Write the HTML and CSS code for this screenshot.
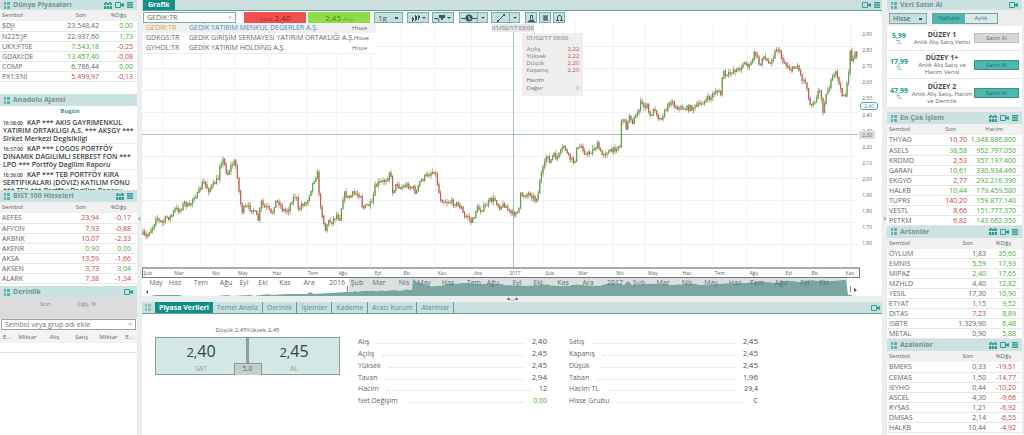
FILE: index.html
```html
<!DOCTYPE html>
<html lang="tr">
<head>
<meta charset="utf-8">
<title>GEDIK:TR</title>
<link rel="stylesheet" href="styles.css">
</head>
<body>
<svg class="defs" aria-hidden="true">
  <symbol id="grip" viewBox="0 0 6 7"><path d="M0 0h2v3H0zM3 0h3v3H3zM0 4h2v3H0zM3 4h3v3H3z" opacity=".8"/></symbol>
  <symbol id="gift" viewBox="0 0 8 7"><path d="M0 1h8v2H0zM0 4h8v3H0zM1 0h2v1H1zM5 0h2v1H5z"/><path d="M2.500 1v6M5.500 1v6" stroke="#cbe2e0" stroke-width=".6" fill="none"/></symbol>
  <symbol id="cam" viewBox="0 0 9 6"><path d="M.5.5h5v5h-5z" fill="none" stroke="currentColor"/><path d="M6 2l3-1v4l-3-1z"/></symbol>
  <symbol id="menu" viewBox="0 0 6 6"><path d="M0 0h6v1.400H0zM0 2.300h6v1.400H0zM0 4.600h6v1.400H0z"/></symbol>
</svg>
<div class="app">
  <aside class="col">
    <section class="panel world">
      <h2 class="title"><svg class="i-grip"><use href="#grip"/></svg><span>Dünya Piyasaları</span><svg class="i-gift"><use href="#gift"/></svg><svg class="i-cam"><use href="#cam"/></svg><svg class="i-menu"><use href="#menu"/></svg></h2>
      <table class="quotes">
        <thead><tr><th>Sembol</th><th>Son</th><th>%Dğş</th></tr></thead>
        <tbody>
        <tr><td>$DJI</td><td>23.548,42</td><td class="up">0,00</td></tr>
        <tr><td>N225:JP</td><td>22.937,60</td><td class="up">1,73</td></tr>
        <tr><td>UKX:FTSE</td><td class="up">7.543,18</td><td class="dn">-0,25</td></tr>
        <tr><td>GDAXI:DE</td><td class="up">13.457,40</td><td class="dn">-0,08</td></tr>
        <tr><td>COMP</td><td>6.786,44</td><td class="up">0,00</td></tr>
        <tr><td>PX1:ENI</td><td class="dn">5.499,97</td><td class="dn">-0,13</td></tr>
        </tbody>
      </table>
    </section>
    <section class="panel">
      <h2 class="title"><svg class="i-grip"><use href="#grip"/></svg><span>Anadolu Ajansi</span></h2>
      <div class="news">
        <h3>Bugün</h3>
        <p><time>16:38:00</time>KAP *** AKIS GAYRIMENKUL YATIRIM ORTAKLIGI A.S. *** AKSGY *** Sirket Merkezi Degisikligi</p>
        <p><time>16:37:00</time>KAP *** LOGOS PORTFÖY DINAMIK DAGILIMLI SERBEST FON *** LPO *** Portföy Dagilim Raporu</p>
        <p><time>16:36:00</time>KAP *** TEB PORTFÖY KIRA SERTIFIKALARI (DÖVIZ) KATILIM FONU *** TEY *** Portföy Dagilim Raporu</p>
      </div>
    </section>
    <section class="panel">
      <h2 class="title"><svg class="i-grip"><use href="#grip"/></svg><span>BİST 100 Hisseleri</span><svg class="i-gift"><use href="#gift"/></svg><svg class="i-menu"><use href="#menu"/></svg></h2>
      <div class="clip">
      <table class="quotes inset">
        <thead><tr><th>Sembol</th><th>Son</th><th>%Dğş</th></tr></thead>
        <tbody>
        <tr><td>AEFES</td><td class="dn">23,94</td><td class="dn">-0,17</td></tr>
        <tr><td>AFYON</td><td class="dn">7,93</td><td class="dn">-0,88</td></tr>
        <tr><td>AKBNK</td><td class="dn">10,07</td><td class="dn">-2,33</td></tr>
        <tr><td>AKENR</td><td class="up">0,90</td><td class="up">0,00</td></tr>
        <tr><td>AKSA</td><td class="dn">13,59</td><td class="dn">-1,66</td></tr>
        <tr><td>AKSEN</td><td class="dn">3,73</td><td class="up">3,04</td></tr>
        <tr><td>ALARK</td><td class="dn">7,38</td><td class="dn">-1,34</td></tr>
        <tr><td>ALBRK</td><td class="dn">1,40</td><td class="dn">-1,38</td></tr>
        </tbody>
      </table>
      </div>
    </section>
    <section class="panel grow">
      <h2 class="title"><svg class="i-grip"><use href="#grip"/></svg><span>Derinlik</span><svg class="i-cam"><use href="#cam"/></svg></h2>
      <div class="depth-head"><span>Son</span><span>Dğş, %</span></div>
      <div class="symbol-box"><input class="add" type="text" aria-label="Sembol veya grup adı ekle" placeholder="Sembol veya grup adı ekle"><span>×</span></div>
      <table class="depth"><thead><tr><th>E...</th><th>Miktar</th><th>Alış</th><th>Satış</th><th>Miktar</th><th>E...</th></tr></thead><tbody><tr><td colspan="6"></td></tr></tbody></table>
    </section>
  </aside>

  <div class="split">‹</div>

  <main class="center">
    <section class="chart-panel">
      <header class="bar"><h1 class="tab-on">Grafik</h1><span class="fill"></span><svg class="i-cam"><use href="#cam"/></svg><svg class="i-menu"><use href="#menu"/></svg></header>
      <div class="stage">
        <div class="tools">
          <div class="symbol-box search"><input type="text" aria-label="Sembol" value="GEDIK:TR"><span>×</span></div>
          <button class="trade sell"><small>Satış</small> 2,40</button>
          <button class="trade buy">2,45 <small>Alış</small></button>
          <select class="tool period" aria-label="Periyot"><option>1g</option></select>
          <button class="tool wide" aria-label="Grafik tipi"><svg width="18" height="8"><path d="M3.500 3v5M6.500 1v6M9.500 1v5" stroke="#34595a" fill="none"/><path d="M3 4h2v2H3zM6 2h2v4H6zM9 2h2v2H9zM13 3h4l-2 2z" fill="#34595a"/></svg></button>
          <button class="tool wide" aria-label="Gösterge"><svg width="18" height="8"><path d="M0 4.500h4l1 3" stroke="#34595a" fill="none"/><path d="M5 1h6v3H9v2H7V4H5zM13 3h4l-2 2z" fill="#34595a"/></svg></button>
          <div class="pair"><button class="tool" aria-label="Olaylar"><svg width="16" height="8"><path d="M0 4.500h16" stroke="#34595a"/><circle cx="8" cy="4" r="3.500"/><path d="M8 2v3h2" stroke="#fff" fill="none" stroke-width=".8"/></svg></button><button class="tool arrow" aria-label="Olay seçenekleri"><svg width="6" height="4"><path d="M1 1h4L3 3z"/></svg></button></div>
          <div class="pair"><button class="tool" aria-label="Çizgi"><svg width="16" height="8"><path d="M5 7l6-6" stroke="#34595a"/><path d="M4 6h2v2H4zM10 0h2v2h-2z"/></svg></button><button class="tool arrow" aria-label="Çizgi seçenekleri"><svg width="6" height="4"><path d="M1 1h4L3 3z"/></svg></button></div>
          <button class="tool sq first" aria-label="Mıknatıs"><svg width="7" height="8"><path d="M2.500 1.500h2v3l1 2h-4l1-2zM0 7.500h7" stroke="#34595a" fill="none"/></svg></button>
          <button class="tool sq" aria-label="Kilit"><svg width="7" height="8"><path d="M1 1h5v6H1z" fill="#6f9190"/><path d="M2 3h3M2 5h3" stroke="#34595a" fill="none"/></svg></button>
          <button class="tool sq" aria-label="Alarm"><svg width="7" height="8"><path d="M1.500 6V3l1-1.500h2l1 1.500v3M0 6.500h3M4 6.500h3" stroke="#34595a" fill="none"/></svg></button>
        </div>
        <ul class="suggest">
          <li class="hit"><b>GEDIK:TR</b><span>GEDİK YATIRIM MENKUL DEĞERLER A.Ş.</span><em>Hisse</em></li>
          <li><b>GDKGS:TR</b><span>GEDİK GİRİŞİM SERMAYESİ YATIRIM ORTAKLIĞI A.Ş.</span><em>Hisse</em></li>
          <li><b>GYHOL:TR</b><span>GEDİK YATIRIM HOLDİNG A.Ş.</span><em>Hisse</em></li>
        </ul>
        <svg class="plot" id="plot" viewBox="0 0 740 256" preserveAspectRatio="none" role="img" aria-label="Fiyat grafiği"></svg>
        <div class="prices" id="prices"></div>
        <div class="stamp">01/02/17 03:00</div>
        <dl class="tip">
          <dt class="when">01/02/17 03:00</dt>
          <div><dt>Açılış</dt><dd>2,22</dd></div><div><dt>Yüksek</dt><dd>2,22</dd></div><div><dt>Düşük</dt><dd>2,20</dd></div><div><dt>Kapanış</dt><dd>2,20</dd></div>
          <dt class="vol">Hacim</dt>
          <div><dt>Değer</dt><dd class="zero">0</dd></div>
        </dl>
      </div>
      <div class="axis" id="axis"></div>
      <div class="nav">
        <svg id="overview" viewBox="0 0 740 18" preserveAspectRatio="none" aria-hidden="true"></svg>
        <div id="months"></div>
      </div>
    </section>
    <div class="hsplit">▴◡▴</div>
    <section class="data-panel">
      <header class="bar"><svg class="i-grip"><use href="#grip"/></svg>
        <nav class="tabs"><button class="tab-on">Piyasa Verileri</button><button>Temel Analiz</button><button>Derinlik</button><button>İşlemler</button><button>Kademe</button><button>Aracı Kurum</button><button>Alarmlar</button></nav>
        <span class="fill"></span><svg class="i-cam"><use href="#cam"/></svg></header>
      <div class="data">
        <div class="ticket">
          <p>Düşük 2,45Yüksek 2,45</p>
          <div class="sides">
            <button><strong><small>2,</small>40</strong><span>SAT</span></button>
            <button><strong><small>2,</small>45</strong><span>AL</span></button>
            <span class="spread">5.0</span>
          </div>
        </div>
        <dl class="facts">
          <div><dt>Alış</dt><dd>2,<b>40</b></dd></div><div><dt>Açılış</dt><dd>2,<b>45</b></dd></div><div><dt>Yüksek</dt><dd>2,<b>45</b></dd></div><div><dt>Tavan</dt><dd>2,<b>94</b></dd></div><div><dt>Hacim</dt><dd>12</dd></div><div><dt>Net Değişim</dt><dd class="up">0,00</dd></div>
        </dl>
        <dl class="facts">
          <div><dt>Satış</dt><dd>2,<b>45</b></dd></div><div><dt>Kapanış</dt><dd>2,<b>45</b></dd></div><div><dt>Düşük</dt><dd>2,<b>45</b></dd></div><div><dt>Taban</dt><dd>1,<b>96</b></dd></div><div><dt>Hacim TL</dt><dd>29,4</dd></div><div><dt>Hisse Grubu</dt><dd>C</dd></div>
        </dl>
      </div>
    </section>
  </main>

  <div class="split">›</div>

  <aside class="col right">
    <section class="panel shop">
      <h2 class="title"><svg class="i-grip"><use href="#grip"/></svg><span>Veri Satın Al</span><svg class="i-cam"><use href="#cam"/></svg></h2>
      <div class="shop-bar"><select class="tool" aria-label="Tür"><option>Hisse</option></select><div class="seg"><button class="on">Haftalık</button><button>Aylık</button></div></div>
      <div class="plans">
        <article><p class="cost">5,99<small>TL</small></p><div><h3>DÜZEY 1</h3><p>Anlık Alış Satış Verisi</p></div><button class="off">Satın Al</button></article>
        <article><p class="cost">17,99<small>TL</small></p><div><h3>DÜZEY 1+</h3><p>Anlık Alış Satış ve Hacim Verisi</p></div><button>Satın Al</button></article>
        <article><p class="cost">47,99<small>TL</small></p><div><h3>DÜZEY 2</h3><p>Anlık Alış Satış, Hacim ve Derinlik</p></div><button>Satın Al</button></article>
      </div>
    </section>
    <section class="panel">
      <h2 class="title"><svg class="i-grip"><use href="#grip"/></svg><span>En Çok İşlem</span><svg class="i-gift"><use href="#gift"/></svg><svg class="i-cam"><use href="#cam"/></svg><svg class="i-menu"><use href="#menu"/></svg></h2>
      <table class="quotes inset volume">
        <thead><tr><th>Sembol</th><th>Son</th><th>Hacim</th></tr></thead>
        <tbody>
        <tr><td>THYAO</td><td class="dn">10,70</td><td class="up">1.348.886.800</td></tr>
        <tr><td>ASELS</td><td class="up">38,58</td><td class="up">952.797.050</td></tr>
        <tr><td>KRDMD</td><td class="dn">2,53</td><td class="up">357.197.400</td></tr>
        <tr><td>GARAN</td><td class="up">10,61</td><td class="up">330.934.460</td></tr>
        <tr><td>EKGYO</td><td class="dn">2,77</td><td class="up">292.216.390</td></tr>
        <tr><td>HALKB</td><td class="up">10,44</td><td class="up">179.459.580</td></tr>
        <tr><td>TUPRS</td><td class="dn">140,20</td><td class="up">159.877.140</td></tr>
        <tr><td>VESTL</td><td class="dn">8,66</td><td class="up">151.777.370</td></tr>
        <tr><td>PETKM</td><td class="dn">6,82</td><td class="up">143.662.350</td></tr>
        </tbody>
      </table>
    </section>
    <section class="panel">
      <h2 class="title"><svg class="i-grip"><use href="#grip"/></svg><span>Artanlar</span><svg class="i-gift"><use href="#gift"/></svg><svg class="i-cam"><use href="#cam"/></svg><svg class="i-menu"><use href="#menu"/></svg></h2>
      <table class="quotes inset">
        <thead><tr><th>Sembol</th><th>Son</th><th>%Dğş</th></tr></thead>
        <tbody>
        <tr><td>ÖYLUM</td><td>1,83</td><td class="up">35,60</td></tr>
        <tr><td>EMNIS</td><td class="up">5,59</td><td class="up">17,93</td></tr>
        <tr><td>MIPAZ</td><td class="up">2,40</td><td class="up">17,65</td></tr>
        <tr><td>MZHLD</td><td>4,40</td><td class="up">12,82</td></tr>
        <tr><td>YESIL</td><td>17,30</td><td class="up">10,90</td></tr>
        <tr><td>ETYAT</td><td>1,15</td><td class="up">9,52</td></tr>
        <tr><td>DITAS</td><td class="dn">7,23</td><td class="up">8,89</td></tr>
        <tr><td>ISBTR</td><td>1.329,90</td><td class="up">6,48</td></tr>
        <tr><td>METAL</td><td>0,90</td><td class="up">5,88</td></tr>
        </tbody>
      </table>
    </section>
    <section class="panel grow">
      <h2 class="title"><svg class="i-grip"><use href="#grip"/></svg><span>Azalanlar</span><svg class="i-gift"><use href="#gift"/></svg><svg class="i-cam"><use href="#cam"/></svg><svg class="i-menu"><use href="#menu"/></svg></h2>
      <table class="quotes inset">
        <thead><tr><th>Sembol</th><th>Son</th><th>%Dğş</th></tr></thead>
        <tbody>
        <tr><td>BMEKS</td><td>0,33</td><td class="dn">-19,51</td></tr>
        <tr><td>CEMAS</td><td>1,50</td><td class="dn">-14,77</td></tr>
        <tr><td>IEYHO</td><td>0,44</td><td class="dn">-10,20</td></tr>
        <tr><td>ASCEL</td><td>4,30</td><td class="dn">-9,66</td></tr>
        <tr><td>RYSAS</td><td>1,21</td><td class="dn">-6,92</td></tr>
        <tr><td>DMSAS</td><td>2,14</td><td class="dn">-6,55</td></tr>
        <tr><td>HALKB</td><td>10,44</td><td class="dn">-4,92</td></tr>
        </tbody>
      </table>
    </section>
  </aside>
</div>
<script src="chart.js"></script>
</body>
</html>
```
FILE: styles.css
```css
* { box-sizing: border-box; }
body, h1, h2, h3, p, dl, dd, ul { margin: 0; padding: 0; }
body { font: 7px/10px "Open Sans", "Noto Sans", sans-serif; color: #5f6668; background: #ecedee; }
button, input, select { font: inherit; color: inherit; margin: 0; padding: 0; border-radius: 0; }
table { border-collapse: collapse; width: 100%; table-layout: fixed; }
svg { display: block; fill: currentColor; }
.defs { position: absolute; width: 0; height: 0; }
.up { color: #43ac32; }
.dn { color: #c4444c; }

.app { display: grid; grid-template-columns: 137px 5px minmax(0, 1fr) 5px 137px; height: 100vh; min-height: 435px; overflow: hidden; }
.col { display: flex; flex-direction: column; min-width: 0; }
.right { padding-right: 2px; }
.split { align-self: center; text-align: center; color: #777; font-size: 9px; }
.center { display: flex; flex-direction: column; min-width: 0; }
.panel { background: #fff; flex: none; }
.grow { flex: 1 0 auto; }

.title { display: flex; align-items: center; gap: 3px; height: 12px; padding: 0 4px; background: #cbe2e0; color: #2f9c96; font-size: 7px; line-height: 12px; }
.title span { flex: 1; color: #77918f; }
.world .title, .shop .title { height: 10px; line-height: 10px; }
.i-grip { width: 6px; height: 7px; color: #3fa9a2; }
.i-gift { width: 8px; height: 7px; }
.i-cam { width: 9px; height: 6px; }
.i-menu { width: 6px; height: 6px; }

.quotes th { height: 11px; padding: 0; font-size: 6px; line-height: 11px; font-weight: 400; text-align: right; background: #f1f1f1; color: #666; }
.quotes td { height: 10px; padding: 0; line-height: 9px; text-align: right; border-bottom: 1px solid #e6e8e8; white-space: nowrap; }
.quotes th:first-child, .quotes td:first-child { text-align: left; padding-left: 2px; width: 52px; }
.quotes th:nth-child(2) { width: 47px; padding-right: 13px; }
.quotes th:nth-child(3) { padding-right: 11px; }
.quotes td:nth-child(3) { padding-right: 4px; }
.inset td:nth-child(3) { padding-right: 6px; }
.quotes.volume th:first-child { width: 40px; }
.volume th:nth-child(2) { width: 40px; padding-right: 11px; }
.volume th:nth-child(3) { padding-right: 19px; }
.world { height: 94px; }
.clip { height: 84px; overflow: hidden; }

.news { height: 84px; overflow: hidden; padding: 1px 0 0 3px; color: #3c4244; }
.news h3 { font-size: 6px; line-height: 8px; text-align: center; color: #3f8ea8; padding-bottom: 3px; }
.news p { height: 26px; font-weight: 600; line-height: 8px; padding-top: 1px; border-bottom: 1px solid #eceeee; }
.news time { font-size: 5px; margin-right: 4px; }

.depth-head { display: flex; gap: 27px; height: 21px; padding: 1px 40px; background: #dcdcdc; font-size: 6px; color: #888; }
.symbol-box { display: flex; align-items: center; height: 11px; margin: 0 1px; padding: 0 3px; background: #fff; border: 1px solid #9aa4a5; }
.symbol-box input { flex: 1; min-width: 0; height: 9px; border: 0; outline: 0; background: none; }
.symbol-box input::placeholder { color: #6c7374; opacity: 1; }
.symbol-box span { color: #aaa; }
.depth th { width: 27px; height: 13px; padding: 0; font-size: 6px; font-weight: 400; background: #f3f3f3; }
.depth th:first-child { width: 14px; }
.depth th:last-child { width: 15px; }
.depth td { height: 9px; border-bottom: 1px solid #e2e2e2; }

.bar { display: flex; align-items: center; height: 11px; padding: 0 2px 0 1px; background: #cbdfde; border-bottom: 1px solid #5fa3a0; gap: 3px; color: #3c9d98; }
.fill { flex: 1; }
.bar .tab-on { background: #128f86; color: #fff; font-size: 7px; line-height: 10px; font-weight: 700; border: 0; padding: 0 5px; align-self: stretch; }

.chart-panel { background: #fff; }
.stage { position: relative; height: 256px; }
.plot { position: absolute; inset: 0; width: 100%; height: 100%; z-index: 0; }
.tools { position: relative; z-index: 2; display: flex; height: 12px; padding-top: 1px; }
.tools .symbol-box { width: 93px; margin: 0 8px 0 1px; border-color: #84aaa9; }
.trade { width: 62px; height: 11px; margin-right: 2px; border: 0; font-size: 8px; line-height: 11px; }
.trade small { font-size: 6px; opacity: .6; }
.sell { background: #f0504f; color: #8b2929; }
.buy { background: #8fdc48; color: #4d7d27; }
.tool { height: 11px; border: 1px solid #7cabaa; background: #c6e0de; color: #34595a; display: flex; align-items: center; justify-content: center; }
select.tool { appearance: none; padding: 0 3px; line-height: 9px; background: linear-gradient(#34595a, #34595a) right 4px center / 3px 2px no-repeat, #c6e0de; }
.tools .period { width: 29px; font-size: 8px; margin: 0 4px 0 2px; }
.wide { width: 22px; margin-right: 3px; }
.pair { display: flex; margin-left: 2px; margin-right: 1px; }
.pair .tool { width: 19px; }
.pair .arrow { width: 10px; border-left: 0; }
.sq { width: 12px; margin-left: 2px; }
.first { margin-left: 4px; }
.suggest { position: relative; z-index: 2; width: 234px; list-style: none; background: #fff; border-bottom: 1px solid #ededed; white-space: nowrap; }
.suggest li { display: grid; grid-template-columns: 43px 1fr auto; padding: 0 9px 0 4px; }
.suggest b { font-weight: 400; }
.suggest em { font-style: normal; font-size: 6px; }
.suggest .hit { background: #f0f0f0; color: #3d8fc0; }
.suggest .hit b { color: #e8943f; }
.suggest .hit em { color: #666; }
.prices span { position: absolute; right: 10px; font-size: 5px; line-height: 8px; height: 8px; color: #666; }
.prices .last { right: 4px; padding: 0 3px; line-height: 6px; border: 1px solid #4aa3bf; border-radius: 3px; color: #3490b0; background: #fff; }
.prices .cross { right: 7px; padding: 0 3px; background: #dcdcdc; }
.stamp { position: absolute; left: 50%; margin-left: -20px; top: 13px; width: 42px; text-align: center; font-size: 6px; line-height: 8px; background: #e8e8e8; white-space: nowrap; }
.tip { position: absolute; left: 51%; margin-left: 3px; top: 22px; width: 61px; height: 63px; padding: 2px 4px; background: #eeeeee; font-size: 6px; line-height: 7px; color: #7b7b7b; }
.tip div { display: flex; justify-content: space-between; line-height: 6px; height: 7px; }
.tip dd { color: #d34a52; }
.tip .zero { color: #999; }
.tip .when { padding-bottom: 4px; color: #666; }
.tip .vol { padding-top: 3px; height: 11px; color: #666; }
.axis { position: relative; height: 11px; width: 97%; border: 1px solid #6f7a7b; border-top: 2px solid #a4acac; overflow: hidden; }
.axis span, .nav span { position: absolute; transform: translateX(-50%); }
.axis span { font-size: 5px; line-height: 8px; }
.nav { position: relative; height: 18px; color: #5f6b6c; }
.nav svg { width: 100%; height: 18px; }
.nav span { top: 0; }
.hsplit { height: 6px; text-align: center; font-size: 6px; line-height: 5px; background: #e9eeee; }

.data-panel { flex: 1; background: #fff; }
.data-panel .bar { height: 12px; padding-left: 3px; gap: 4px; }
.data-panel .bar .i-grip { opacity: .6; }
.tabs { display: flex; align-self: stretch; }
.tabs button { border: 0; border-right: 1px solid #4f9f9b; background: none; color: #4a9994; padding: 0 4px; }
.tabs .tab-on { padding: 0 4px; }
.data { display: grid; grid-template-columns: 185fr 193fr 193fr 102fr; column-gap: 18px; padding: 10px 0 0 13px; }
.ticket > p { text-align: center; line-height: 13px; font-size: 6px; }
.sides { position: relative; display: grid; grid-template-columns: 1fr 1fr; column-gap: 1px; background: #8fa3a3; }
.sides button { height: 38px; display: flex; flex-direction: column; align-items: center; background: #d3e7e6; border: 1px solid #8a9c9c; color: #2f4447; }
.sides strong { font-size: 16px; line-height: 26px; font-weight: 400; }
.sides strong small { font-size: 13px; }
.sides button span { line-height: 8px; color: #93a5a5; }
.spread { position: absolute; left: 50%; bottom: 0; width: 28px; margin-left: -14px; height: 12px; text-align: center; background: #c6cdcd; border: 1px solid #8a9c9c; border-bottom: 0; }
.facts { padding: 11px 4px 0 0; }
.facts div { display: flex; align-items: baseline; height: 12px; line-height: 12px; }
.facts div::after { content: ""; order: 1; flex: 1; margin: 0 8px; border-bottom: 1px dotted #dcdcdc; }
.facts dd { order: 2; color: #4a5052; }
.facts dd.up { color: #43ac32; }
.facts b { font-size: 8px; font-weight: 400; }

.shop { margin-bottom: 4px; background: none; }
.shop-bar { display: flex; gap: 5px; height: 16px; padding: 3px 2px 2px; background: #ecedee; }
.shop-bar select { width: 38px; }
.seg { display: flex; border: 1px solid #6aa5a2; width: 66px; height: 11px; }
.seg button { flex: 1; border: 0; background: #dcebea; font-size: 6px; line-height: 9px; color: #4d7573; }
.seg .on { background: #4cb8af; color: #24726d; }
.plans { background: #fff; }
.plans article { display: grid; grid-template-columns: 22px 1fr 45px; align-items: center; height: 28px; padding: 0 3px 0 1px; border-bottom: 1px solid #e6e8e8; text-align: center; }
.plans article:first-child { height: 25px; }
.plans article:last-child { height: 29px; }
.plans h3 { font-size: 7px; line-height: 9px; color: #444a4c; }
.plans p { font-size: 6px; line-height: 7px; }
.plans .cost { font-size: 7px; font-weight: 700; color: #249a93; }
.cost small { display: block; font-size: 5px; line-height: 6px; font-weight: 400; }
.plans button { height: 10px; border: 1px solid #3f8f8a; background: #4cb8af; color: #226b66; font-size: 6px; line-height: 8px; }
.plans .off { background: #d6d6d6; border-color: #bfbfbf; color: #666; }
```
FILE: chart.js
```js
(function () {
  var W = 740;
  // Closing-price outline, [x, y] in thirds of a unit, one list per stretch of the series.
  var a = [[8,312],[20,322],[30,300],[40,290],[48,258],[58,275],[68,278],[80,262],[92,262],[105,238],[120,240],[133,218],[148,232],[160,200],[172,195],[190,155],[205,180],[220,165],[235,145],[240,100],[250,90],[262,135],[272,110],[283,97],[290,115],[297,185],[305,245],[312,235],[325,232],[340,240],[355,270],[363,215],[372,232],[385,235],[395,258],[405,215],[418,218],[428,240],[443,243],[455,212],[468,195],[475,245],[485,222],[500,218],[510,185],[522,150],[533,130],[540,230],[550,265],[555,305],[563,275],[575,275],[590,255],[600,265],[608,205],[615,190],[625,205],[640,190],[662,195],[668,235],[685,225],[697,222],[703,175],[715,160],[730,155],[742,145],[750,120],[758,185],[772,160],[780,175],[800,165],[820,175],[828,190],[840,155],[855,140],[870,130],[885,122],[892,160],[900,205],[915,215],[930,215],[950,222],[965,235],[972,262],[985,258],[995,280],[1010,235],[1020,240],[1035,230],[1050,212],[1065,210],[1078,230],[1095,225],[1108,245],[1118,255]];
  var b = [[20,240],[26,255],[30,195],[45,195],[60,190],[75,210],[85,190],[90,145],[105,100],[112,65],[118,100],[130,75],[140,85],[150,70],[163,45],[172,75],[185,90],[193,98],[200,60],[215,48],[228,75],[240,68],[262,45],[275,75],[290,65],[305,65],[325,48]];
  var c = [[0,440],[3,365],[10,355],[20,385],[28,345],[38,365],[48,350],[62,310],[72,320],[80,315],[90,350],[105,325],[118,360],[135,335],[152,300],[165,320],[185,325],[205,325],[230,320],[250,305],[275,290],[288,270],[302,285],[308,215],[320,230],[340,210],[355,210],[370,188],[390,200],[405,155],[420,200],[428,165],[445,190],[460,170],[472,140],[485,175],[498,195],[515,210],[532,195],[545,235],[560,250],[568,315],[585,300],[597,270],[604,290],[607,345],[612,310],[625,265],[640,230],[650,215],[660,270],[675,290],[685,235],[691,140],[697,195],[705,150],[712,190]];
  function map(list, ox, oy) { return list.map(function (p) { return [ox + p[0] / 3, oy + p[1] / 3]; }); }
  var pts = map(a, -2, 119).concat(map(b, 368, 119), map(c, 478, -11));
  var seed = 7;
  function rnd() { seed = (seed * 16807) % 2147483647; return seed / 2147483647; }
  function at(x) {
    for (var i = 1; i < pts.length; i++) {
      if (pts[i][0] >= x) {
        var p = pts[i - 1], q = pts[i];
        return p[1] + (q[1] - p[1]) * (x - p[0]) / ((q[0] - p[0]) || 1);
      }
    }
    return pts[pts.length - 1][1];
  }
  var out = '<g stroke="#f0f2f2">';
  [35,57,79,101,145,167,189,211,233].forEach(function (y) { out += '<path d="M0 ' + y + '.5H716"/>'; });
  [21,58,93,126,164,194,228,259,293,329,401,433,471,503,539,571,605,640,672,708].forEach(function (x) { out += '<path d="M' + x + '.5 10V255"/>'; });
  out += '</g><path d="M371.5 17V256M0 123.500H716" stroke="#a3c4c1" fill="none"/>';
  var prev = at(1), paths = { g: '', r: '', w: '' };
  for (var x = 1; x < 716; x += 1.6) {
    var y = at(x) + (rnd() - .5) * 5;
    var hi = Math.min(prev, y) - rnd() * 4, lo = Math.max(prev, y) + rnd() * 4;
    var X = x.toFixed(1);
    paths.w += 'M' + X + ' ' + hi.toFixed(1) + 'V' + lo.toFixed(1);
    paths[y < prev ? 'g' : 'r'] += 'M' + X + ' ' + (Math.min(prev, y) - .5).toFixed(1) + 'V' + (Math.max(prev, y) + .5).toFixed(1);
    prev = y;
  }
  out += '<path d="' + paths.w + '" stroke="#b09468" stroke-width=".8"/><path d="' + paths.g + '" stroke="#55a848" stroke-width="1.200"/><path d="' + paths.r + '" stroke="#c0605a" stroke-width="1.200"/>';
  document.getElementById('plot').innerHTML = out;

  // Overview strip: [x, height] pairs for the area under the long history.
  var h = [[8,0],[14,1],[38,1],[40,0],[75,0],[85,1],[90,0],[108,1],[112,0],[126,2],[130,1],[145,2],[165,2],[168,4],[172,2],[188,3],[204,4],[207,4],[225,5],[245,5],[262,6],[270,6],[271,17],[275,14],[280,12],[287,10],[298,10],[304,12],[325,13],[345,12],[368,11],[390,10],[400,12],[415,10],[440,11],[456,10],[470,13],[482,11],[486,15],[490,11],[510,12],[530,11],[548,12],[560,11],[580,12],[600,13],[618,14],[635,13],[642,15],[655,14],[670,16],[690,15],[700,16],[704,16],[706,1],[710,1]];
  var area = 'M8 18';
  h.forEach(function (p, i) {
    if (i && p[0] > 207 && p[0] < 704) {
      var q = h[i - 1];
      for (var x = q[0] + 3; x < p[0]; x += 3) {
        area += 'L' + x + ' ' + (18 - (q[1] + (p[1] - q[1]) * (x - q[0]) / (p[0] - q[0])) + (rnd() - .5) * 1.2).toFixed(1);
      }
    }
    area += 'L' + p[0] + ' ' + (18 - p[1]);
  });
  document.getElementById('overview').innerHTML =
    '<path d="M207 0H705V18H207z" fill="#dcdfdf"/><path d="' + area + 'V18z" fill="#7aa6a1"/>' +
    '<path d="M205.500 8v6M708.500 8v6" stroke="#7b8587"/><path d="M6 12v4l-2-2zM712 10l3 2-3 2z" fill="#445566"/>';

  var html = '';
  for (var i = 0; i < 14; i++) {
    html += '<span style="top:' + Math.round(19 + i * 16.1) + 'px">' + (2.9 - i * .1).toFixed(2).replace('.', ',') + '</span>';
  }
  html += '<span class="last" style="top:91px">2,40</span><span class="cross" style="top:120px">2,30</span>';
  document.getElementById('prices').innerHTML = html;

  function labels(id, text, xs, width) {
    document.getElementById(id).innerHTML = text.split(' ').map(function (t, n) {
      return '<span style="left:' + ((xs[n] - 142) / width * 100).toFixed(2) + '%">' + t + '</span>';
    }).join('');
  }
  labels('axis', 'Şub Mar Nis May Haz Tem Ağu Eyl Eki Kas Ara 2017 Şub Mar Nis May Haz Tem Ağu Eyl Eki Kas',
    [147,178,215,242,276,312,342,377,406,441,477,514,549,582,619,652,686,719,753,788,814,849], 716);
  labels('months', 'May Haz Tem Ağu Eyl Eki Kas Ara 2016 Şub Mar Nis May Haz Tem Ağu Eyl Eki Kas Ara 2017 Şub Mar Nis May Haz Tem Ağu Eyl Eki',
    [156,175,201,226,244,263,285,309,337,357,379,404,424,448,474,493,517,538,563,588,615,639,663,687,711,735,757,781,805,824], W);
}());
```
